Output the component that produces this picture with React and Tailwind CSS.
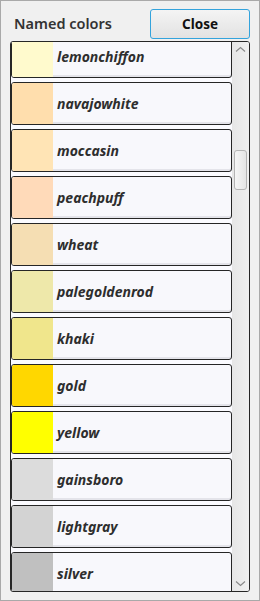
import React from 'react';

const colors = [
  { name: 'lemonchiffon', hex: '#fffacd' },
  { name: 'navajowhite', hex: '#ffdead' },
  { name: 'moccasin', hex: '#ffe4b5' },
  { name: 'peachpuff', hex: '#ffdab9' },
  { name: 'wheat', hex: '#f5deb3' },
  { name: 'palegoldenrod', hex: '#eee8aa' },
  { name: 'khaki', hex: '#f0e68c' },
  { name: 'gold', hex: '#ffd700' },
  { name: 'yellow', hex: '#ffff00' },
  { name: 'gainsboro', hex: '#dcdcdc' },
  { name: 'lightgray', hex: '#d3d3d3' },
  { name: 'silver', hex: '#c0c0c0' },
];

const ColorRow = ({ color }) => (
  <li className="flex h-[43px] mb-[4px] border border-[#262626] rounded-[3px] bg-[#f8f8fc] shadow-[inset_0_-2px_0_#e4e4ea] overflow-hidden">
    <div className="w-[41px] shrink-0" style={{ backgroundColor: color.hex }} />
    <div className="flex items-center pl-[4px] pb-[1px] text-[14px] font-bold italic text-[#2e2e2e]">
      {color.name}
    </div>
  </li>
);

const Chevron = ({ down }) => (
  <svg width="11" height="7" viewBox="0 0 11 7" className="text-[#8a8a8a]">
    <path
      d={down ? 'M1 1.5 L5.5 5.5 L10 1.5' : 'M1 5.5 L5.5 1.5 L10 5.5'}
      fill="none"
      stroke="currentColor"
      strokeWidth="1.2"
    />
  </svg>
);

const App = () => {
  return (
    <div
      className="w-[260px] h-[601px] bg-[#f0f0f0] border border-[#a9a9a9] flex flex-col px-[9px] pt-[8px] pb-[8px]"
      style={{ fontFamily: '"Noto Sans", "Open Sans", sans-serif' }}
    >
      <div className="flex items-center justify-between">
        <h1 className="pl-[4px] text-[14.5px] font-semibold text-[#333]">Named colors</h1>
        <button className="w-[100px] h-[30px] rounded-[3px] border border-[#33a3dc] bg-gradient-to-b from-[#f4f4f4] to-[#e2e2e2] text-[13.5px] font-bold text-[#111]">
          Close
        </button>
      </div>

      <div className="mt-[2px] flex-1 flex border border-[#262626] rounded-[3px] bg-[#fbfbff] overflow-hidden">
        <div className="flex-1 overflow-hidden">
          <ul className="-mt-[7px]">
            {colors.map((c) => (
              <ColorRow key={c.name} color={c} />
            ))}
          </ul>
        </div>
        <div className="w-[17px] shrink-0 bg-gradient-to-r from-[#e6e6e6] to-[#f0f0f0] flex flex-col items-center justify-between py-[4px]">
          <div className="flex flex-col items-center w-full">
            <Chevron />
            <div className="mt-[97px] w-[13px] h-[40px] rounded-[3px] border border-[#b4b4b4] bg-gradient-to-r from-[#f6f6f6] to-[#e4e4e4]" />
          </div>
          <Chevron down />
        </div>
      </div>
    </div>
  );
};

export default App;
